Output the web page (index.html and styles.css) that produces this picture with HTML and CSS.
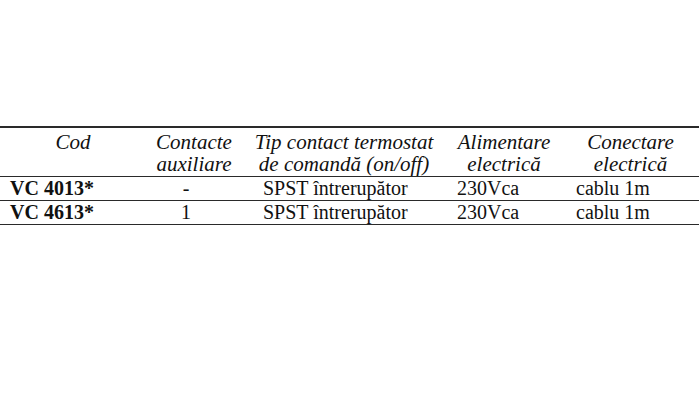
FILE: index.html
```html
<!DOCTYPE html>
<html lang="ro">
<head>
<meta charset="utf-8">
<title>Tabel</title>
<link rel="stylesheet" href="styles.css">
</head>
<body>
<div class="table">
  <div class="row head">
    <div class="c c1">Cod</div>
    <div class="c c2">Contacte<br>auxiliare</div>
    <div class="c c3">Tip contact termostat<br>de comandă (on/off)</div>
    <div class="c c4">Alimentare<br>electrică</div>
    <div class="c c5">Conectare<br>electrică</div>
  </div>
  <div class="row data">
    <div class="c c1"><b>VC 4013*</b></div>
    <div class="c c2">-</div>
    <div class="c c3">SPST întrerupător</div>
    <div class="c c4">230Vca</div>
    <div class="c c5">cablu 1m</div>
  </div>
  <div class="row data">
    <div class="c c1"><b>VC 4613*</b></div>
    <div class="c c2">1</div>
    <div class="c c3">SPST întrerupător</div>
    <div class="c c4">230Vca</div>
    <div class="c c5">cablu 1m</div>
  </div>
</div>
</body>
</html>
```
FILE: styles.css
```css
html, body {
  margin: 0;
  padding: 0;
  background: #ffffff;
}
body {
  font-family: "Liberation Serif", "Times New Roman", serif;
  font-size: 20px;
  line-height: 22px;
  color: #111111;
}
.table {
  margin-top: 126px;
  width: 699px;
  border-top: 2px solid #2a2a2a;
}
.row {
  display: grid;
  grid-template-columns: 146px 96px 204px 116px 137px;
  border-bottom: 1px solid #2a2a2a;
}
.head {
  padding: 3px 0 1px;
  font-style: italic;
  font-size: 21px;
}
.head .c {
  text-align: center;
  white-space: nowrap;
}
.data {
  padding: 0 0 1px;
}
.data .c1 { padding-left: 10px; }
.data .c2 { text-align: center; padding-right: 16px; }
.data .c3 { padding-left: 21px; }
.data .c4 { padding-left: 11px; }
.data .c5 { padding-left: 14px; }
b { font-weight: bold; }
```
